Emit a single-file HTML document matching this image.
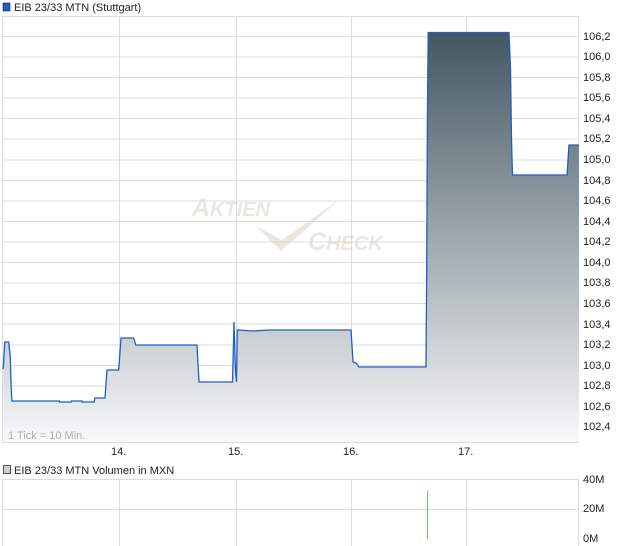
<!DOCTYPE html><html><head><style>body{margin:0;background:#fff}svg{display:block}text{font-family:"Liberation Sans",sans-serif;font-size:11px;fill:#222}</style></head><body>
<svg width="620" height="546" viewBox="0 0 620 546">
<defs><linearGradient id="g" x1="0" y1="32" x2="0" y2="443" gradientUnits="userSpaceOnUse"><stop offset="0" stop-color="#435661"/><stop offset="1" stop-color="#f8f9fa"/></linearGradient></defs>
<rect x="3" y="3" width="7" height="8" fill="#1f5fbf" stroke="#123" stroke-width="0.6"/>
<text x="14" y="11">EIB 23/33 MTN (Stuttgart)</text>
<g stroke="#dcdcdc" stroke-width="1">
<rect x="2.5" y="16.5" width="576" height="426" fill="#fff"/>
<path d="M3 36.5H579M3 57H579M3 77.5H579M3 98H579M3 118.5H579M3 139H579M3 160H579M3 180.5H579M3 201H579M3 221.5H579M3 242H579M3 262.5H579M3 283H579M3 303.5H579M3 324H579M3 345H579M3 365.5H579M3 386H579M3 406.5H579M3 427H579"/>
<path d="M119.5 17V442M236.5 17V442M351.5 17V442M466.5 17V442"/>
</g>
<g opacity="0.55">
<text x="192" y="216" style="font-size:25px;fill:#d9d2c8;font-style:italic;font-weight:bold">A<tspan style="font-size:20px">KTIEN</tspan></text>
<text x="308" y="250" style="font-size:25px;fill:#d9d2c8;font-style:italic;font-weight:bold">C<tspan style="font-size:20px">HECK</tspan></text>
<path d="M256 226L281 251L340 199L282 240Z" fill="#d9d2c8"/>
</g>
<path d="M3.2 369L4.8 342H8.7L10.3 357L11.1 386L11.9 401H59.5V402H71.4V401H82V402H94L95 398H105L107 370H118.7L121 338H133.7L135.7 345H197L199 382H232.5L234 322L235.3 367L236.5 382L237.3 330L252.4 331L270 330H351L353 362L356 363L359 367H426L426.6 285L427.4 117L428.2 32.5H509L510.5 68L511.5 140L512.5 175H567L569 145H579V442H3Z" fill="url(#g)"/>
<path d="M3.2 369L4.8 342H8.7L10.3 357L11.1 386L11.9 401H59.5V402H71.4V401H82V402H94L95 398H105L107 370H118.7L121 338H133.7L135.7 345H197L199 382H232.5L234 322L235.3 367L236.5 382L237.3 330L252.4 331L270 330H351L353 362L356 363L359 367H426L426.6 285L427.4 117L428.2 32.5H509L510.5 68L511.5 140L512.5 175H567L569 145H579" fill="none" stroke="#1f5fbf" stroke-width="1.3"/>
<text x="8" y="439" style="fill:#b0b0b0">1 Tick = 10 Min.</text>
<g>
<text x="583" y="40">106,2</text><text x="583" y="60">106,0</text><text x="583" y="81">105,8</text><text x="583" y="101">105,6</text><text x="583" y="122">105,4</text><text x="583" y="142">105,2</text><text x="583" y="163">105,0</text><text x="583" y="184">104,8</text><text x="583" y="204">104,6</text><text x="583" y="225">104,4</text><text x="583" y="245">104,2</text><text x="583" y="266">104,0</text><text x="583" y="286">103,8</text><text x="583" y="307">103,6</text><text x="583" y="328">103,4</text><text x="583" y="348">103,2</text><text x="583" y="369">103,0</text><text x="583" y="389">102,8</text><text x="583" y="410">102,6</text><text x="583" y="430">102,4</text>
</g>
<text x="111" y="455">14.</text><text x="228" y="455">15.</text><text x="343" y="455">16.</text><text x="458" y="455">17.</text>
<rect x="3.5" y="465.5" width="7" height="8" fill="#ccc" stroke="#333" stroke-width="0.8"/>
<text x="14" y="474">EIB 23/33 MTN Volumen in MXN</text>
<g stroke="#dcdcdc"><rect x="2.5" y="479.5" width="576" height="70" fill="#fff"/>
<path d="M3 509.5H579M119.5 480V546M236.5 480V546M351.5 480V546M466.5 480V546"/></g>
<rect x="427" y="491" width="1" height="48" fill="#55cc55"/>
<text x="583" y="483">40M</text><text x="583" y="512">20M</text><text x="583" y="542">0M</text>
</svg></body></html>
